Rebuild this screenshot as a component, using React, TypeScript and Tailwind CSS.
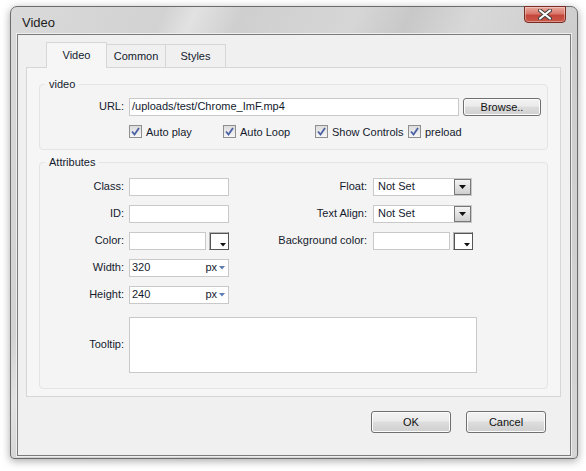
import React from "react";

// Win7 styled "Video" properties dialog

const font = "font-['Liberation_Sans',Arial,sans-serif]";

function Check({ label, className = "" }: { label: string; className?: string }) {
  return (
    <label className={`flex items-center gap-[4px] ${className}`}>
      <span className="flex h-[13px] w-[13px] items-center justify-center border border-[#8e8f8f] bg-[linear-gradient(#dcdcdc,#f6f6f6)]">
        <svg width="9" height="9" viewBox="0 0 9 9">
          <path d="M1 4.5 L3.5 7.5 L8 1" fill="none" stroke="#4b61a4" strokeWidth="1.8" />
        </svg>
      </span>
      <span>{label}</span>
    </label>
  );
}

function Btn({ label, className = "" }: { label: string; className?: string }) {
  return (
    <button className={`rounded-[3px] border border-[#707070] bg-[linear-gradient(#f2f2f2_0%,#ebebeb_45%,#dddddd_50%,#cfcfcf_100%)] text-[#111] shadow-[inset_0_0_0_1px_#fcfcfc] ${className}`}>
      {label}
    </button>
  );
}

function Input({ className = "", value }: { className?: string; value?: string }) {
  return (
    <div className={`flex h-[18px] items-center border border-[#c9c9c9] bg-white px-[2px] ${className}`}>
      {value}
    </div>
  );
}

function ColorBtn() {
  return (
    <div className="relative ml-[3px] h-[18px] w-[20px] border border-[#b5b5b5] border-r-[#555] border-b-[#555] bg-white shadow-[inset_1px_1px_0_#555]">
      <svg className="absolute bottom-[2px] right-[2px]" width="6" height="4" viewBox="0 0 6 4">
        <path d="M0 0 H6 L3 3.5 Z" fill="#111" />
      </svg>
    </div>
  );
}

function Select() {
  return (
    <div className="flex h-[18px] w-[99px] items-center border border-[#c9c9c9] bg-white pl-[4px]">
      <span className="flex-1">Not Set</span>
      <div className="flex h-[16px] w-[17px] items-center justify-center border border-[#777] bg-[linear-gradient(#f4f4f4,#cfcfcf)]">
        <svg width="7" height="4" viewBox="0 0 7 4">
          <path d="M0 0 H7 L3.5 4 Z" fill="#111" />
        </svg>
      </div>
    </div>
  );
}

function PxInput({ value }: { value: string }) {
  return (
    <div className="flex h-[18px] w-[100px] items-center border border-[#c9c9c9] bg-white px-[2px]">
      <span className="flex-1">{value}</span>
      <span>px</span>
      <svg className="ml-[2px] mr-[1px]" width="6" height="4" viewBox="0 0 6 4">
        <path d="M0 0 H6 L3 3.5 Z" fill="#5b7bb5" />
      </svg>
    </div>
  );
}

export default function App() {
  return (
    <div className={`h-[471px] w-[586px] overflow-hidden bg-white text-[11px] text-[#141a2e] ${font}`}>
      {/* Window */}
      <div className="ml-[10px] mt-[6px] flex h-[453px] w-[568px] flex-col rounded-t-[7px] rounded-b-[4px] border border-[#6c6c6c] bg-[linear-gradient(115deg,#dadada_0%,#d2d2d2_20%,#e2e2e2_24%,#cfcfcf_30%,#d6d6d6_45%,#c8c8c8_52%,#d8d8d8_60%,#cdcdcd_75%,#d5d5d5_100%)] shadow-[0_2px_8px_rgba(0,0,0,0.35)]">
        {/* Title bar */}
        <div className="flex h-[27px] items-start justify-between">
          <span className="ml-[11px] mt-[6px] text-[13px] text-[#1c1c1c]">Video</span>
          <div className="mr-[11px] -mt-px flex h-[17px] w-[42px] items-center justify-center rounded-b-[4px] border border-[#7a2c22] bg-[linear-gradient(#e9a89c_0%,#d9786a_45%,#c4473a_55%,#c9584a_100%)] shadow-[inset_0_0_0_1px_rgba(255,255,255,0.35)]">
            <svg width="14" height="11" viewBox="0 0 14 11">
              <path d="M2 1.5 L12 9.5 M12 1.5 L2 9.5" stroke="#3b3b3b" strokeWidth="4" strokeLinecap="round" />
              <path d="M2 1.5 L12 9.5 M12 1.5 L2 9.5" stroke="#ffffff" strokeWidth="2.2" strokeLinecap="round" />
            </svg>
          </div>
        </div>

        {/* Client area */}
        <div className="mx-[6px] flex h-[422px] flex-col border border-[#7b7b7b] bg-[#f0f0f0] shadow-[0_0_0_1px_#eeeeee] pl-[8px] pr-[9px] pt-[7px]">
          {/* Tabs */}
          <div className="ml-[20px] flex items-end">
            <div className="relative z-10 -mb-px flex h-[26px] w-[61px] items-center justify-center border border-b-0 border-[#d6d6d6] bg-[#f6f6f6]">
              Video
            </div>
            <div className="flex h-[23px] w-[59px] items-center justify-center border border-l-0 border-b-0 border-[#d6d6d6] bg-[#f0f0f0]">
              Common
            </div>
            <div className="flex h-[23px] w-[60px] items-center justify-center border border-l-0 border-b-0 border-[#d6d6d6] bg-[#f0f0f0]">
              Styles
            </div>
          </div>

          {/* Tab page */}
          <div className="flex h-[330px] flex-col border border-[#d6d6d6] bg-[#f6f6f6] px-[12px] pt-[8px]">
            <fieldset className="rounded-[4px] border border-[#e4e4e4] bg-[#f4f4f4] pb-[9px]">
              <legend className="ml-[5px] px-[4px]">video</legend>
              <div className="mt-[5px] flex items-center">
                <span className="w-[89px] pr-[5px] text-right">URL:</span>
                <Input className="w-[330px]" value="/uploads/test/Chrome_ImF.mp4" />
                <Btn label="Browse.." className="ml-[4px] h-[18px] w-[78px] leading-[14px]" />
              </div>
              <div className="mt-[8px] flex items-center pl-[89px]">
                <Check label="Auto play" className="w-[94px]" />
                <Check label="Auto Loop" className="w-[92px]" />
                <Check label="Show Controls" className="w-[93px]" />
                <Check label="preload" />
              </div>
            </fieldset>

            <fieldset className="mt-[4px] rounded-[4px] border border-[#e4e4e4] bg-[#f4f4f4] pb-[15px]">
              <legend className="ml-[5px] px-[4px]">Attributes</legend>
              <div className="mt-[7px] flex flex-col gap-[9px]">
                <div className="flex items-center">
                  <span className="w-[89px] pr-[5px] text-right">Class:</span>
                  <Input className="w-[100px]" />
                  <span className="w-[144px] pr-[6px] text-right">Float:</span>
                  <Select />
                </div>
                <div className="flex items-center">
                  <span className="w-[89px] pr-[5px] text-right">ID:</span>
                  <Input className="w-[100px]" />
                  <span className="w-[144px] pr-[6px] text-right">Text Align:</span>
                  <Select />
                </div>
                <div className="flex items-center">
                  <span className="w-[89px] pr-[5px] text-right">Color:</span>
                  <Input className="w-[77px]" />
                  <ColorBtn />
                  <span className="w-[144px] pr-[6px] text-right">Background color:</span>
                  <Input className="w-[77px]" />
                  <ColorBtn />
                </div>
                <div className="flex items-center">
                  <span className="w-[89px] pr-[5px] text-right">Width:</span>
                  <PxInput value="320" />
                </div>
                <div className="flex items-center">
                  <span className="w-[89px] pr-[5px] text-right">Height:</span>
                  <PxInput value="240" />
                </div>
                <div className="mt-[4px] flex items-center">
                  <span className="w-[89px] pr-[5px] text-right">Tooltip:</span>
                  <div className="h-[56px] w-[348px] border border-[#c9c9c9] bg-white" />
                </div>
              </div>
            </fieldset>
          </div>

          {/* Dialog buttons */}
          <div className="mt-[14px] flex justify-end gap-[15px] pr-[15px]">
            <Btn label="OK" className="h-[22px] w-[80px]" />
            <Btn label="Cancel" className="h-[22px] w-[80px]" />
          </div>
        </div>
      </div>
    </div>
  );
}
